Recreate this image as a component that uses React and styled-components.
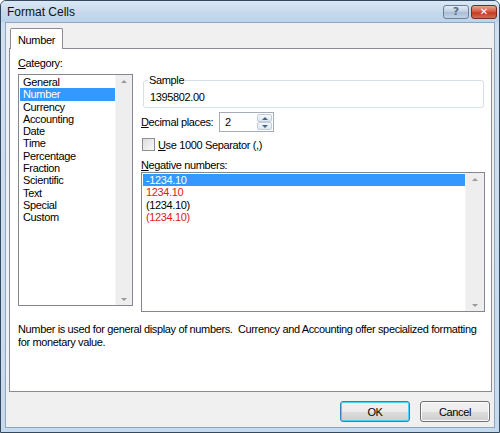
import React from "react";
import styled, { createGlobalStyle } from "styled-components";

const GlobalStyle = createGlobalStyle`
  html, body {
    margin: 0;
    padding: 0;
    background: #fff;
  }
  body {
    font-family: "Liberation Sans", Arial, sans-serif;
    font-size: 11px;
    letter-spacing: -0.36px;
    color: #000;
  }
`;

const Window = styled.div`
  width: 500px;
  height: 433px;
  box-sizing: border-box;
  border: 1px solid #34495e;
  border-radius: 6px 6px 0 0;
  background: linear-gradient(to bottom, #bcd4ea 0px, #cfe0f1 30px, #c6daee 100%);
  display: flex;
  flex-direction: column;
  overflow: hidden;
`;

const TitleBar = styled.div`
  height: 21px;
  flex: none;
  display: flex;
  align-items: center;
  padding: 0 2px 0 6px;
  background: linear-gradient(to bottom, #dbe8f5 0%, #c5d9ed 55%, #bcd3ea 100%);
`;

const Title = styled.span`
  flex: 1;
  font-family: "Liberation Sans", Arial, sans-serif;
  font-size: 12px;
  letter-spacing: 0;
  color: #111;
`;

const CaptionButton = styled.div`
  width: 26px;
  height: 14px;
  box-sizing: border-box;
  margin-left: 2px;
  border: 1px solid ${({ close }) => (close ? "#7a2a1c" : "#6b7f96")};
  border-radius: 3px;
  background: ${({ close }) =>
    close
      ? "linear-gradient(to bottom, #e8a593 0%, #d2533a 50%, #c43c22 55%, #d7694f 100%)"
      : "linear-gradient(to bottom, #e3ecf6 0%, #bccde0 50%, #a9bdd4 55%, #c3d4e7 100%)"};
  display: flex;
  align-items: center;
  justify-content: center;
  color: ${({ close }) => (close ? "#fff" : "#5d6f84")};
  font-family: "DejaVu Sans", sans-serif;
  font-weight: bold;
  font-size: ${({ close }) => (close ? 10 : 11)}px;
  letter-spacing: 0;
  line-height: 1;
`;

const Client = styled.div`
  flex: 1;
  margin: 0 4px 4px 4px;
  background: #f0f0f0;
  border: 1px solid #8ea6bf;
  display: flex;
  flex-direction: column;
  padding: 5px 3px 0 3px;
`;

const TabStrip = styled.div`
  display: flex;
  padding-left: 1px;
  height: 20px;
  position: relative;
  z-index: 1;
`;

const Tab = styled.div`
  width: 53px;
  box-sizing: border-box;
  height: 21px;
  border: 1px solid #898c95;
  border-bottom: none;
  border-radius: 2px 2px 0 0;
  background: #fff;
  padding: 5px 0 0 7px;
`;

const Panel = styled.div`
  width: 483px;
  height: 344px;
  box-sizing: border-box;
  border: 1px solid #898c95;
  background: #fff;
  padding: 7px 6px 0 8px;
  display: flex;
  flex-direction: column;
`;

const Columns = styled.div`
  display: grid;
  grid-template-columns: 115px 1fr;
  column-gap: 8px;
`;

const Column = styled.div`
  display: flex;
  flex-direction: column;
`;

const Label = styled.div`
  line-height: 14px;
  height: 14px;
  white-space: nowrap;
  margin-top: ${({ mt }) => mt || 0}px;
`;

const ListBox = styled.div`
  height: ${({ h }) => h}px;
  box-sizing: border-box;
  border: 1px solid #828790;
  margin-top: ${({ mt }) => mt || 0}px;
  display: flex;
  background: #fff;
`;

const Items = styled.div`
  flex: 1;
  padding: 1px 0 0 1px;
`;

const Item = styled.div`
  line-height: 12.3px;
  height: 12.3px;
  padding-left: 3px;
  white-space: nowrap;
  background: ${({ selected }) => (selected ? "#3399ff" : "transparent")};
  color: ${({ selected, red }) => (selected ? "#fff" : red ? "#e0201b" : "#000")};
`;

const ScrollTrack = styled.div`
  width: ${({ w }) => w}px;
  flex: none;
  background: #eeeeee;
  border-left: 1px solid #f4f4f4;
  display: flex;
  flex-direction: column;
  justify-content: space-between;
  align-items: center;
  padding: 5px 0 4px;
`;

const Arrow = styled.div`
  width: 0;
  height: 0;
  border-left: 3px solid transparent;
  border-right: 3px solid transparent;
  ${({ down }) =>
    down ? "border-top: 3px solid #9a9a9a;" : "border-bottom: 3px solid #9a9a9a;"}
`;

const Fieldset = styled.fieldset`
  margin: 17px 0 0 2px;
  width: 341px;
  box-sizing: border-box;
  border: 1px solid #d5dfe5;
  border-radius: 3px;
  padding: 0 6px 3px 6px;
  min-width: 0;
`;

const Legend = styled.legend`
  padding: 0 1px;
  margin-left: -2px;
  line-height: 14px;
`;

const SampleValue = styled.div`
  line-height: 14px;
  margin-top: 3px;
`;

const Row = styled.div`
  display: flex;
  align-items: center;
  margin-top: ${({ mt }) => mt || 0}px;
`;

const RowLabel = styled.div`
  width: ${({ w }) => w}px;
  white-space: nowrap;
`;

const Spin = styled.div`
  width: 55px;
  height: 20px;
  box-sizing: border-box;
  border: 1px solid #a5acb5;
  background: #fff;
  display: flex;
  align-items: center;
  padding: 1px 1px 1px 5px;
`;

const SpinValue = styled.span`
  flex: 1;
`;

const SpinButtons = styled.div`
  width: 15px;
  height: 16px;
  display: flex;
  flex-direction: column;
`;

const SpinButton = styled.div`
  flex: 1;
  border: 1px solid #c2cdda;
  border-radius: 2px;
  background: linear-gradient(to bottom, #f6f9fc, #dce6f1);
  display: flex;
  align-items: center;
  justify-content: center;
`;

const SpinArrow = styled.div`
  width: 0;
  height: 0;
  border-left: 3px solid transparent;
  border-right: 3px solid transparent;
  ${({ down }) =>
    down ? "border-top: 3px solid #4d6185;" : "border-bottom: 3px solid #4d6185;"}
`;

const Check = styled.div`
  width: 13px;
  height: 13px;
  box-sizing: border-box;
  border: 1px solid #8f8f8f;
  background: linear-gradient(135deg, #dcdcdc, #fbfbfb);
  margin: 0 3px 0 1px;
`;

const Description = styled.div`
  margin-top: 11px;
  line-height: 13px;
  white-space: pre;
`;

const ButtonRow = styled.div`
  display: flex;
  justify-content: flex-end;
  gap: 10px;
  padding: 9px 1px 0 0;
`;

const Button = styled.div`
  width: 70px;
  height: 21px;
  box-sizing: border-box;
  border: 1px solid ${({ primary }) => (primary ? "#3c7fb1" : "#707070")};
  border-radius: 3px;
  background: linear-gradient(to bottom, #f2f2f2 0%, #ebebeb 50%, #dddddd 51%, #cfcfcf 100%);
  box-shadow: ${({ primary }) => (primary ? "inset 0 0 0 1px #48d2f9" : "inset 0 0 0 1px #fcfcfc")};
  display: flex;
  align-items: center;
  justify-content: center;
`;

const categories = [
  "General",
  "Number",
  "Currency",
  "Accounting",
  "Date",
  "Time",
  "Percentage",
  "Fraction",
  "Scientific",
  "Text",
  "Special",
  "Custom",
];

const negatives = [
  { text: "-1234.10", selected: true },
  { text: "1234.10", red: true },
  { text: "(1234.10)" },
  { text: "(1234.10)", red: true },
];

export default function App() {
  return (
    <>
      <GlobalStyle />
      <Window>
        <TitleBar>
          <Title>Format Cells</Title>
          <CaptionButton>?</CaptionButton>
          <CaptionButton close>✕</CaptionButton>
        </TitleBar>
        <Client>
          <TabStrip>
            <Tab>Number</Tab>
          </TabStrip>
          <Panel>
            <Columns>
              <Column>
                <Label>
                  <u>C</u>ategory:
                </Label>
                <ListBox h={232} mt={4}>
                  <Items>
                    {categories.map((c) => (
                      <Item key={c} selected={c === "Number"}>
                        {c}
                      </Item>
                    ))}
                  </Items>
                  <ScrollTrack w={16}>
                    <Arrow />
                    <Arrow down />
                  </ScrollTrack>
                </ListBox>
              </Column>
              <Column>
                <Fieldset>
                  <Legend>Sample</Legend>
                  <SampleValue>1395802.00</SampleValue>
                </Fieldset>
                <Row mt={4}>
                  <RowLabel w={78}>
                    <u>D</u>ecimal places:
                  </RowLabel>
                  <Spin>
                    <SpinValue>2</SpinValue>
                    <SpinButtons>
                      <SpinButton>
                        <SpinArrow />
                      </SpinButton>
                      <SpinButton>
                        <SpinArrow down />
                      </SpinButton>
                    </SpinButtons>
                  </Spin>
                </Row>
                <Row mt={6}>
                  <Check />
                  <span>
                    <u>U</u>se 1000 Separator (,)
                  </span>
                </Row>
                <Label mt={7}>
                  <u>N</u>egative numbers:
                </Label>
                <ListBox h={140}>
                  <Items>
                    {negatives.map((n, i) => (
                      <Item key={i} selected={n.selected} red={n.red}>
                        {n.text}
                      </Item>
                    ))}
                  </Items>
                  <ScrollTrack w={18}>
                    <Arrow />
                    <Arrow down />
                  </ScrollTrack>
                </ListBox>
              </Column>
            </Columns>
            <Description>
              {"Number is used for general display of numbers.  Currency and Accounting offer specialized formatting\nfor monetary value."}
            </Description>
          </Panel>
          <ButtonRow>
            <Button primary>OK</Button>
            <Button>Cancel</Button>
          </ButtonRow>
        </Client>
      </Window>
    </>
  );
}
